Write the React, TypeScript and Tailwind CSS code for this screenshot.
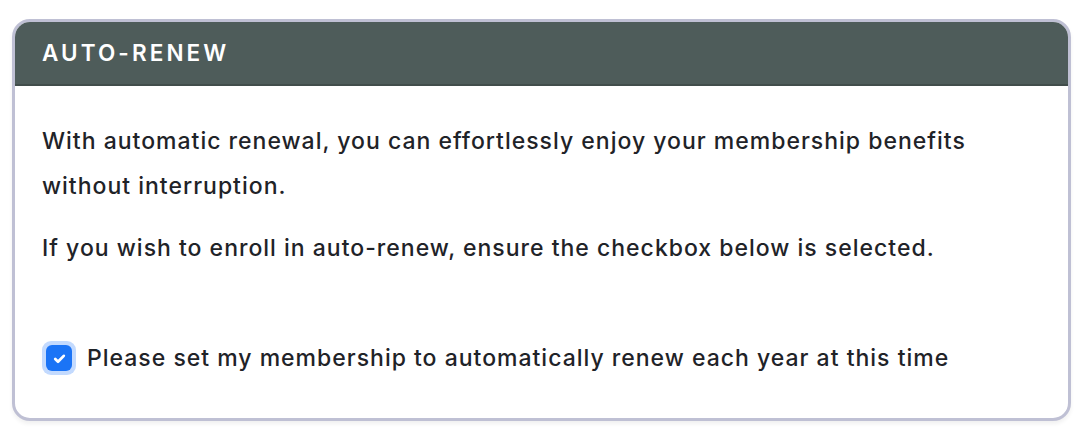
import React, { useState } from 'react';

const font = { fontFamily: 'Inter, "Noto Sans", sans-serif' };

const App: React.FC = () => {
  const [checked, setChecked] = useState(true);

  return (
    <div className="w-[1083px] h-[440px] bg-white pt-[19px] px-[12px]" style={font}>
      <div className="rounded-[18px] border-[3px] border-[#bfc0d4] overflow-hidden shadow-[0_3px_4px_rgba(0,0,0,0.06)] bg-white">
        <div className="h-[64px] bg-[#4e5c5a] border-b-2 border-[#414d4b] flex items-center px-[27px]">
          <h2 className="text-white text-[22.5px] font-semibold tracking-[3.1px]">AUTO-RENEW</h2>
        </div>
        <div className="px-[27px] pt-[33px] pb-[42px] text-[#1f2328] text-[23px] font-medium tracking-[1px]">
          <p className="leading-[45px]">
            With automatic renewal, you can effortlessly enjoy your membership benefits
            <br />
            without interruption.
          </p>
          <p className="mt-[17px] leading-[45px]">
            If you wish to enroll in auto-renew, ensure the checkbox below is selected.
          </p>
          <label className="mt-[70px] flex items-center gap-[11px] cursor-pointer">
            <span className="rounded-[9px] p-[4px] bg-[#c3dafe]">
              <button
                type="button"
                onClick={() => setChecked(!checked)}
                className="w-[26px] h-[26px] rounded-[6px] bg-[#1b74f6] flex items-center justify-center"
              >
                {checked && (
                  <svg viewBox="0 0 16 16" className="w-[17px] h-[17px]" fill="none">
                    <path d="M4 8.5l2.6 2.6L12 5.5" stroke="white" strokeWidth="2.6" strokeLinecap="round" strokeLinejoin="round" />
                  </svg>
                )}
              </button>
            </span>
            <span>Please set my membership to automatically renew each year at this time</span>
          </label>
        </div>
      </div>
    </div>
  );
};

export default App;
